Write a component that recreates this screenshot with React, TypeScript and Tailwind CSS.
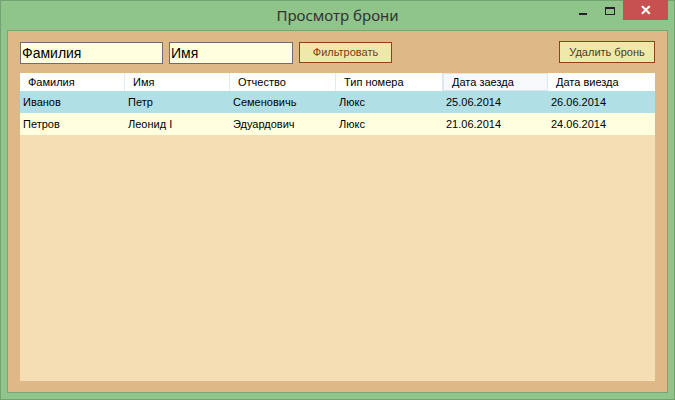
import React from 'react';

const columns = [
  { title: 'Фамилия', w: 'w-[105px]' },
  { title: 'Имя', w: 'w-[105px]' },
  { title: 'Отчество', w: 'w-[106px]' },
  { title: 'Тип номера', w: 'w-[107px]' },
  { title: 'Дата заезда', w: 'w-[105px]' },
  { title: 'Дата виезда', w: 'w-[106px]' },
];

const rows = [
  { cells: ['Иванов', 'Петр', 'Семеновичь', 'Люкс', '25.06.2014', '26.06.2014'], bg: 'bg-[#b0e0e6]' },
  { cells: ['Петров', 'Леонид I', 'Эдуардович', 'Люкс', '21.06.2014', '24.06.2014'], bg: 'bg-[#ffffe0]' },
];

export default function App() {
  return (
    <div className="w-[675px] h-[400px] bg-[#8fc48b] border border-[#74a171] flex flex-col font-['Liberation_Sans',Arial,sans-serif]">
      {/* заголовок окна */}
      <div className="h-[29px] relative flex items-center justify-center shrink-0">
        <span className="text-[15px] text-[#333] font-['Noto_Sans',sans-serif] leading-none -mt-[1px]">Просмотр брони</span>
        <div className="absolute right-[6px] top-[-1px] flex items-start">
          <div className="w-[8px] h-[2px] bg-[#222] mt-[13px] mr-[18px]" />
          <div className="w-[10px] h-[8px] border border-[#222] border-t-2 mt-[7px] mr-[8px]" />
          <div className="w-[45px] h-[20px] bg-[#c75050] flex items-center justify-center text-white text-[14px] font-bold leading-none">
            ✕
          </div>
        </div>
      </div>

      {/* клиентская область */}
      <div className="flex-1 mx-[6px] mb-[6px] border border-[#78a675] bg-[#deb887] flex flex-col px-[12px] pt-[10px] pb-[11px]">
        <div className="flex items-start h-[32px]">
          <div className="w-[143px] h-[22px] mt-[1px] bg-[#ffffe0] border border-[#6e6e6e] text-[14px] text-black px-[1px] leading-[20px]">
            Фамилия
          </div>
          <div className="w-[124px] h-[22px] mt-[1px] ml-[6px] bg-[#ffffe0] border border-[#6e6e6e] text-[14px] text-black px-[1px] leading-[20px]">
            Имя
          </div>
          <div className="w-[93px] h-[21px] mt-[1px] ml-[6px] bg-[#eee8aa] border border-[#8b4513] text-[11px] text-[#7b3a12] flex items-center justify-center">
            Фильтровать
          </div>
          <div className="flex-1" />
          <div className="w-[96px] h-[22px] bg-[#eee8aa] border border-[#8b4513] text-[11px] text-[#4f3a1e] flex items-center justify-center">
            Удалить бронь
          </div>
        </div>

        {/* таблица */}
        <div className="flex-1 bg-[#f5deb3] flex flex-col text-[11px] text-black">
          <div className="flex h-[18px] bg-white">
            {columns.map((c, i) => (
              <div
                key={c.title}
                className={`${c.w} h-full flex items-center pl-[8px] ${
                  i === 4 ? 'border border-[#dbe6f1] bg-[#f7f9fc]' : i < 5 ? 'border-r border-[#e3e9f0]' : ''
                }`}
              >
                {c.title}
              </div>
            ))}
          </div>
          {rows.map((r, ri) => (
            <div key={ri} className={`flex h-[22px] ${r.bg}`}>
              {r.cells.map((cell, ci) => (
                <div key={ci} className={`${columns[ci].w} h-full flex items-center pl-[3px]`}>
                  {cell}
                </div>
              ))}
            </div>
          ))}
        </div>
      </div>
    </div>
  );
}
